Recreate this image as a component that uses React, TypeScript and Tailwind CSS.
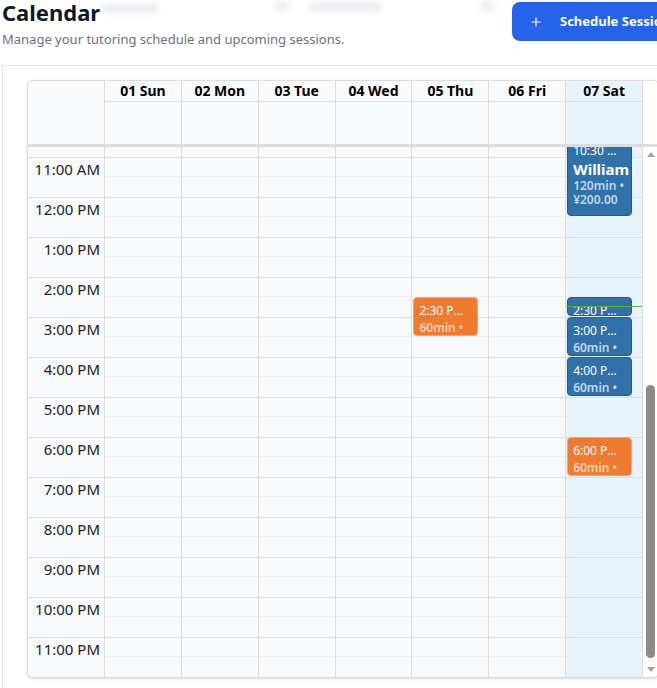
import { Plus } from "lucide-react";

const days = ["01 Sun", "02 Mon", "03 Tue", "04 Wed", "05 Thu", "06 Fri", "07 Sat"];

const hours = Array.from({ length: 24 }, (_, i) => {
  const h = i % 12 === 0 ? 12 : i % 12;
  return `${h}:00 ${i < 12 ? "AM" : "PM"}`;
});

type Session = {
  day: number;
  start: number; // minutes from midnight
  length: number; // minutes shown
  time: string;
  tone: "blue" | "orange";
  name?: string;
  meta: string;
  price?: string;
};

const sessions: Session[] = [
  { day: 6, start: 630, length: 120, time: "10:30 AM - 12:30 PM", tone: "blue", name: "William", meta: "120min •", price: "¥200.00" },
  { day: 4, start: 870, length: 60, time: "2:30 PM - 3:30 PM", tone: "orange", meta: "60min •" },
  { day: 6, start: 870, length: 30, time: "2:30 PM - 3:30 PM", tone: "blue", meta: "60min •" },
  { day: 6, start: 900, length: 60, time: "3:00 PM - 4:00 PM", tone: "blue", meta: "60min •" },
  { day: 6, start: 960, length: 60, time: "4:00 PM - 5:00 PM", tone: "blue", meta: "60min •" },
  { day: 6, start: 1080, length: 60, time: "6:00 PM - 7:00 PM", tone: "orange", meta: "60min •" },
];

const HOUR = 40;

function SessionBlock({ s }: { s: Session }) {
  const blue = s.tone === "blue";
  const sub = blue ? "text-[#c3d6ea]" : "text-[#fdd2b3]";
  return (
    <div
      className={
        "absolute left-px right-[10px] overflow-hidden rounded-[4px] border pl-[5px] pt-[5px] " +
        (blue ? "border-[#245b8c] bg-[#3071aa]" : "border-[#f8a563] bg-[#f07a30]")
      }
      style={{ top: (s.start / 60) * HOUR, height: (s.length / 60) * HOUR - 1 }}
    >
      <div className="truncate pr-[10px] text-[12px] leading-4 text-white">{s.time}</div>
      {s.name && <div className="whitespace-nowrap text-[15px] font-bold leading-5 text-white">{s.name}</div>}
      <div className={"whitespace-nowrap text-[12px] font-semibold " + (s.name ? "leading-[14px] " : "mt-px leading-4 ") + sub}>
        {s.meta}
      </div>
      {s.price && <div className={"text-[12px] font-semibold leading-[14px] " + sub}>{s.price}</div>}
    </div>
  );
}

function ScrollTrack() {
  return (
    <div className="flex h-[530px] w-[15px] shrink-0 flex-col bg-white">
      <div className="flex h-[15px] items-center justify-center">
        <div className="h-0 w-0 border-x-[4px] border-b-[5px] border-x-transparent border-b-[#a3a3a3]" />
      </div>
      <div className="flex flex-1 flex-col justify-end pb-[4px]">
        <div className="mx-[3px] h-[273px] rounded-full bg-[#8a8a8a]" />
      </div>
      <div className="flex h-[15px] items-center justify-center">
        <div className="h-0 w-0 border-x-[4px] border-t-[5px] border-x-transparent border-t-[#a3a3a3]" />
      </div>
    </div>
  );
}

export default function App() {
  return (
    <div className="h-[688px] w-[657px] overflow-hidden bg-white font-['Noto_Sans',sans-serif] text-[#111827]">
      {/* page header */}
      <div className="flex items-start justify-between pl-[2px]">
        <div>
          <div className="flex items-center">
            <h1 className="text-[22px] font-bold leading-6 text-[#111827]">Calendar</h1>
            <span className="ml-[2px] mt-[-8px] h-[7px] w-[56px] rounded bg-gray-300 opacity-60 blur-[3px]" />
            <span className="ml-[117px] mt-[-12px] h-[10px] w-[14px] rounded bg-gray-300 opacity-40 blur-[3px]" />
            <span className="ml-[20px] mt-[-10px] h-[8px] w-[72px] rounded bg-gray-300 opacity-50 blur-[3px]" />
            <span className="ml-[99px] mt-[-12px] h-[10px] w-[14px] rounded bg-gray-300 opacity-40 blur-[3px]" />
          </div>
          <p className="mt-[5px] text-[13px] leading-5 text-[#6b7280]">
            Manage your tutoring schedule and upcoming sessions.
          </p>
        </div>
        <button className="mt-[2px] flex h-[39px] w-[145px] shrink-0 items-center gap-[17px] rounded-l-lg bg-[#2563eb] pl-[17px] text-[13px] font-bold text-white">
          <Plus size={14} strokeWidth={2} className="shrink-0" />
          <span className="whitespace-nowrap">Schedule Session</span>
        </button>
      </div>

      {/* content panel */}
      <div className="ml-[2px] mt-4 h-[700px] border-l border-t border-[#e5e7eb] pl-6 pt-[14px]">
        <div className="w-[632px] overflow-hidden rounded-md border border-[#dddddd] bg-[#f8f9fb] shadow-[0_1px_3px_rgba(0,0,0,0.15)]">
          {/* column headers */}
          <div className="grid grid-cols-[77px_repeat(7,minmax(0,1fr))_15px] grid-rows-[21px_42px]">
            <div className="row-span-2 border-r border-[#dddddd]" />
            {days.map((d, i) => (
              <div
                key={d}
                className={
                  "border-b border-r border-[#dddddd] text-center text-sm font-bold leading-5 text-black " +
                  (i === 6 ? "bg-[#e8f4fd]" : "")
                }
              >
                {d}
              </div>
            ))}
            <div className="row-span-2 bg-white" />
            {days.map((d, i) => (
              <div key={d + "-all"} className={"border-r border-[#dddddd] " + (i === 6 ? "bg-[#e8f4fd]" : "")} />
            ))}
          </div>

          {/* time grid, scrolled to the end of the day */}
          <div className="flex border-t-[3px] border-[#dddddd]">
            <div className="flex h-[530px] flex-1 flex-col justify-end overflow-hidden">
              <div className="grid shrink-0 grid-cols-[77px_repeat(7,minmax(0,1fr))]">
                <div className="border-r border-[#dddddd]">
                  {hours.map((h) => (
                    <div key={h} className="h-10 border-t border-[#dddddd] pr-[4px] pt-px text-right text-[15px] leading-5 text-[#222222]">
                      {h}
                    </div>
                  ))}
                </div>
                {days.map((d, i) => (
                  <div key={d + "-col"} className={"relative border-r border-[#dddddd] " + (i === 6 ? "bg-[#e8f4fd]" : "")}>
                    {hours.map((h) => (
                      <div key={h} className="h-10 border-t border-[#dddddd]">
                        <div className="h-[19px] border-b border-[#eef0f3]" />
                      </div>
                    ))}
                    {sessions
                      .filter((s) => s.day === i)
                      .map((s) => (
                        <SessionBlock key={s.time + s.start} s={s} />
                      ))}
                    {i === 6 && <div className="absolute left-0 right-0 top-[589px] h-px bg-[#63b22f]" />}
                  </div>
                ))}
              </div>
            </div>
            <ScrollTrack />
          </div>
        </div>
      </div>
    </div>
  );
}
